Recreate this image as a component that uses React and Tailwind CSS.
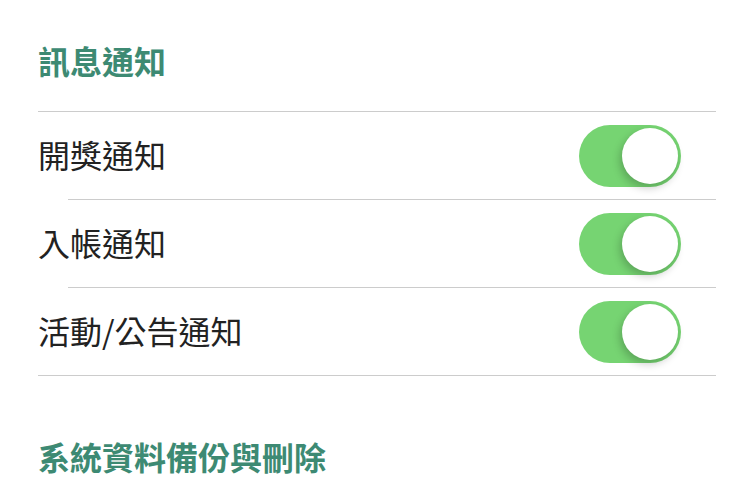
import { useState } from 'react'

const items = [
  { id: 'draw', label: '開獎通知' },
  { id: 'deposit', label: '入帳通知' },
  { id: 'event', label: '活動/公告通知' },
]

function Toggle({ on, onChange }) {
  return (
    <button
      type="button"
      role="switch"
      aria-checked={on}
      onClick={() => onChange(!on)}
      className={`flex h-[62px] w-[102px] shrink-0 items-center rounded-full p-[3px] transition-colors ${
        on ? 'justify-end bg-[#76d472]' : 'justify-start bg-[#e5e5e5]'
      }`}
    >
      <span className="block h-[56px] w-[56px] rounded-full bg-white shadow-[-2px_4px_8px_rgba(0,0,0,0.22)]" />
    </button>
  )
}

export default function App() {
  const [state, setState] = useState({ draw: true, deposit: true, event: true })

  return (
    <div className="min-h-screen bg-white pl-[38px] pr-[34px] font-['Noto_Sans_CJK_TC','Noto_Sans',sans-serif]">
      <div className="flex h-[111px] items-center pt-[8px]">
        <h2 className="text-[32px] font-bold leading-none text-[#3d8a73]">訊息通知</h2>
      </div>
      <div className="border-y border-[#cccccc]">
        {items.map((item, i) => (
          <div key={item.id}>
            {i > 0 && <div className="ml-[30px] h-px bg-[#cccccc]" />}
            <div className="flex h-[87px] items-center justify-between pr-[35px]">
              <span className="mb-[4px] text-[32px] leading-none text-[#222222]">{item.label}</span>
              <Toggle on={state[item.id]} onChange={(v) => setState({ ...state, [item.id]: v })} />
            </div>
          </div>
        ))}
      </div>
      <div className="pt-[64px]">
        <h2 className="text-[32px] font-bold leading-none text-[#3d8a73]">系統資料備份與刪除</h2>
      </div>
    </div>
  )
}
